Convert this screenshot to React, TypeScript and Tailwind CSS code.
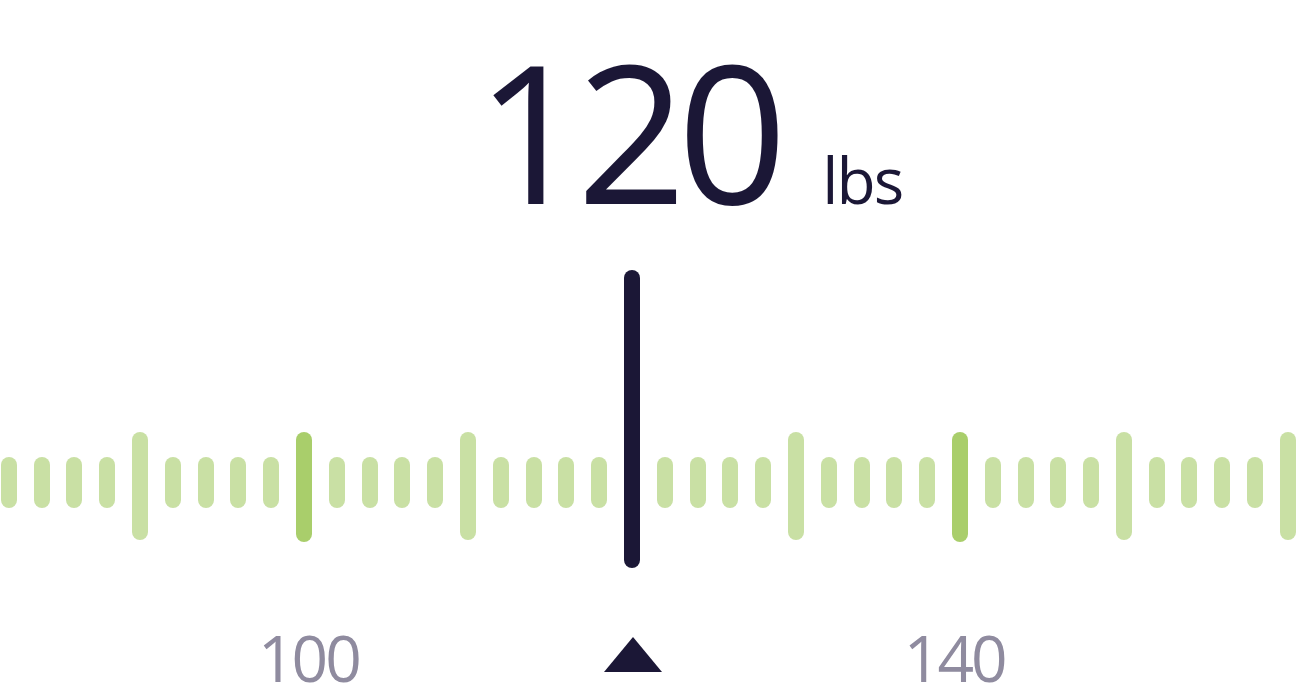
import React from "react";

const values = Array.from({ length: 40 }, (_, i) => 82 + i * 2);

const Tick = ({ v }: { v: number }) => {
  const major = (v - 100) % 40 === 0;
  const long = v % 10 === 0;
  if (major) {
    return <div className="w-4 h-[110px] shrink-0 rounded-full bg-[#a9ce6b]" />;
  }
  if (long) {
    return <div className="w-4 h-[108px] shrink-0 rounded-full bg-[#c9e0a4]" />;
  }
  return <div className="w-4 h-[51px] mt-[25px] shrink-0 rounded-full bg-[#c9e0a4]" />;
};

export default function App() {
  return (
    <div className="w-[1296px] h-[700px] bg-white overflow-hidden font-['Open_Sans',sans-serif] text-[#1b1736]">
      {/* Current value */}
      <div className="flex items-baseline gap-[44px] pt-[34px] pl-[476px]">
        <span className="text-[192px] leading-none tracking-[-9px]">120</span>
        <span className="text-[64px] leading-none tracking-[-2px]">lbs</span>
      </div>

      {/* Ruler */}
      <div className="relative mt-[44px] h-[298px]">
        <div className="flex items-start gap-[16.8px] pl-[0.8px] pt-[162px]">
          {values.map((v) => (
            <Tick key={v} v={v} />
          ))}
        </div>
        <div className="absolute top-0 left-[624px] w-4 h-full rounded-full bg-[#1b1736]" />
      </div>

      {/* Scale labels */}
      <div className="flex items-start mt-[58px] pl-[258px] text-[64px] leading-none tracking-[-3px] text-[#8f8b9f]">
        <span>100</span>
        <svg className="mt-[11px] ml-[245px] shrink-0" width="58" height="35" viewBox="0 0 58 35">
          <polygon points="29,0 58,35 0,35" fill="#1b1736" />
        </svg>
        <span className="ml-[242px]">140</span>
      </div>
    </div>
  );
}
